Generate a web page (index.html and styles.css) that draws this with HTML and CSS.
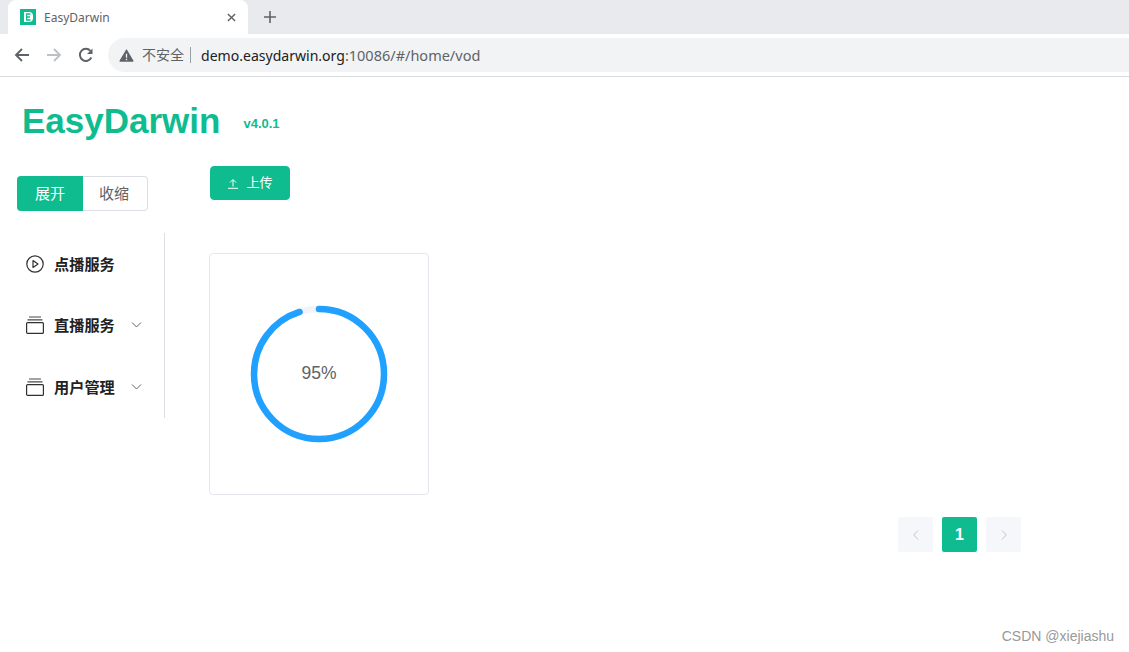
FILE: index.html
```html
<!DOCTYPE html>
<html lang="zh-CN">
<head>
  <meta charset="UTF-8">
  <meta name="viewport" content="width=device-width, initial-scale=1.0">
  <title>EasyDarwin</title>
  <link rel="stylesheet" href="styles.css">
</head>
<body>
  <div class="tabbar">
    <div class="tab">
      <svg class="favicon" viewBox="0 0 16 16">
        <rect width="16" height="16" fill="#0fbc90"/>
        <path d="M4 3h5a4 4 0 0 1 4 4v2a4 4 0 0 1-4 4H4z" fill="#fff"/>
        <path d="M6 5h4.5M6 8h4M6 11h4.5M6.6 5v6" stroke="#0fbc90" stroke-width="1.3" fill="none"/>
      </svg>
      <span class="tab-title">EasyDarwin</span>
      <svg class="tab-close" viewBox="0 0 10 10"><path d="M1 1l8 8M9 1l-8 8" stroke="#5f6368" stroke-width="1.6" fill="none"/></svg>
    </div>
    <svg class="tab-new" viewBox="0 0 12 12"><path d="M6 0v12M0 6h12" stroke="#5f6368" stroke-width="1.6" fill="none"/></svg>
  </div>

  <div class="toolbar">
    <svg class="nav-icon" viewBox="0 0 16 16"><path d="M15 8H2M8 2L2 8l6 6" stroke="#5f6368" stroke-width="1.9" fill="none"/></svg>
    <svg class="nav-icon" viewBox="0 0 16 16"><path d="M1 8h13M8 2l6 6-6 6" stroke="#bdc1c6" stroke-width="1.9" fill="none"/></svg>
    <svg class="nav-icon" viewBox="0 0 16 16"><path d="M13.3 10.5A6 6 0 1 1 12.4 3.9" stroke="#5f6368" stroke-width="2" fill="none"/><path d="M14.5 1.5V7H9z" fill="#5f6368"/></svg>
    <div class="omnibox">
      <svg class="warn" viewBox="0 0 16 14"><path d="M8 1l7 12H1z" fill="#5f6368" stroke="#5f6368" stroke-width="1.2" stroke-linejoin="round"/><path d="M8 5v4.500M8 10.500V12" stroke="#f1f3f4" stroke-width="1.4"/></svg>
      <span class="insecure">不安全</span>
      <span class="url"><span class="url-host">demo.easydarwin.org</span>:10086/#/home/vod</span>
    </div>
  </div>

  <div class="page">
    <header class="brand">
      <h1>EasyDarwin</h1>
      <span class="version">v4.0.1</span>
    </header>

    <div class="layout">
      <aside class="sidebar">
        <div class="toggle">
          <button class="toggle-btn active">展开</button>
          <button class="toggle-btn">收缩</button>
        </div>
        <nav class="menu">
          <a class="menu-item">
            <svg class="menu-icon" viewBox="0 0 18 18"><circle cx="9" cy="9" r="8.2" stroke="#303133" stroke-width="1.2" fill="none"/><path d="M7 5.5L12 9l-5 3.500z" stroke="#303133" stroke-width="1.2" fill="none" stroke-linejoin="round"/></svg>
            <span>点播服务</span>
          </a>
          <a class="menu-item">
            <svg class="menu-icon" viewBox="0 0 18 18"><path d="M3 1h12M1.5 3.800h15" stroke="#4a4a4a" stroke-width="1.2" fill="none"/><rect x="0.6" y="6.6" width="16.8" height="10.8" rx="1" stroke="#303133" stroke-width="1.2" fill="none"/></svg>
            <span>直播服务</span>
            <svg class="chevron" viewBox="0 0 10 6"><path d="M0.5 0.5L5 5l4.500-4.500" stroke="#606266" fill="none"/></svg>
          </a>
          <a class="menu-item">
            <svg class="menu-icon" viewBox="0 0 18 18"><path d="M3 1h12M1.5 3.800h15" stroke="#4a4a4a" stroke-width="1.2" fill="none"/><rect x="0.6" y="6.6" width="16.8" height="10.8" rx="1" stroke="#303133" stroke-width="1.2" fill="none"/></svg>
            <span>用户管理</span>
            <svg class="chevron" viewBox="0 0 10 6"><path d="M0.5 0.5L5 5l4.500-4.500" stroke="#606266" fill="none"/></svg>
          </a>
        </nav>
      </aside>

      <main class="content">
        <button class="upload">
          <svg class="upload-icon" viewBox="0 0 12 12"><path d="M6 9.5V3M3 5.5l3-3 3 3M1 11.300h10" stroke="#fff" fill="none"/></svg>
          <span>上传</span>
        </button>

        <div class="card">
          <div class="progress">
            <svg viewBox="0 0 138 138">
              <circle cx="69" cy="69" r="65" stroke="#f2f3f8" stroke-width="6.5" fill="none"/>
              <circle cx="69" cy="69" r="65" stroke="#20a0ff" stroke-width="6.5" fill="none" stroke-linecap="round" stroke-dasharray="388 408.4" transform="rotate(-90 69 69)"/>
            </svg>
            <span class="progress-text">95%</span>
          </div>
        </div>

        <div class="pager">
          <button class="page-btn">
            <svg class="page-arrow" viewBox="0 0 6 10"><path d="M5 0.5L0.7 5 5 9.5" stroke="#c0c4cc" fill="none"/></svg>
          </button>
          <button class="page-btn current">1</button>
          <button class="page-btn">
            <svg class="page-arrow" viewBox="0 0 6 10"><path d="M1 0.5L5.3 5 1 9.5" stroke="#c0c4cc" fill="none"/></svg>
          </button>
        </div>
      </main>
    </div>
  </div>

  <div class="watermark">CSDN @xiejiashu</div>
</body>
</html>
```

FILE: styles.css
```css
html, body {
  height: 100%;
}
body {
  margin: 0;
  font-family: "Liberation Sans", "Noto Sans CJK SC", sans-serif;
  background-color: #fff;
  overflow: hidden;
}
button {
  font-family: inherit;
  cursor: pointer;
}

/* browser chrome */
.tabbar {
  display: flex;
  align-items: flex-end;
  height: 34px;
  padding-left: 8px;
  background-color: #e8eaed;
  box-sizing: border-box;
}
.tab {
  display: flex;
  align-items: center;
  width: 240px;
  height: 34px;
  padding: 0 10px 0 12px;
  box-sizing: border-box;
  background-color: #fff;
  border-radius: 8px 8px 0 0;
}
.favicon {
  width: 16px;
  height: 16px;
  margin-right: 8px;
}
.tab-title {
  flex: 1;
  font-family: "Noto Sans", sans-serif;
  font-size: 12px;
  color: #5f6368;
}
.tab-close {
  width: 9px;
  height: 9px;
  margin-right: 2px;
}
.tab-new {
  width: 12px;
  height: 12px;
  margin: 0 0 11px 16px;
}
.toolbar {
  display: flex;
  align-items: center;
  height: 42px;
  padding-left: 14px;
  border-bottom: 1px solid #dadce0;
  background-color: #fff;
}
.nav-icon {
  width: 16px;
  height: 16px;
  margin-right: 16px;
}
.omnibox {
  flex: 1;
  display: flex;
  align-items: center;
  height: 34px;
  margin-left: -2px;
  padding-left: 11px;
  background-color: #f1f3f4;
  border-radius: 17px 0 0 17px;
}
.warn {
  width: 15px;
  height: 13px;
  margin-right: 8px;
}
.insecure {
  padding-right: 6px;
  margin-right: 10px;
  border-right: 1px solid #9aa0a6;
  font-size: 14px;
  line-height: 16px;
  color: #5f6368;
}
.url {
  font-family: "Noto Sans", sans-serif;
  font-size: 14.5px;
  color: #5f6368;
}
.url-host {
  font-size: 14.05px;
  color: #202124;
}

/* page */
.brand {
  display: flex;
  align-items: center;
  height: 89px;
  padding-left: 22px;
}
.brand h1 {
  margin: 0 23px 2px 0;
  font-size: 35px;
  color: #0fbc90;
}
.version {
  font-size: 13px;
  font-weight: bold;
  color: #0fbc90;
  margin-top: 4px;
}
.layout {
  display: flex;
}
.sidebar {
  width: 148px;
  margin: 10px 0 0 17px;
}
.toggle {
  display: flex;
  width: 131px;
  height: 35px;
}
.toggle-btn {
  flex: 1;
  padding: 0 2px 3px 0;
  font-size: 15px;
  color: #606266;
  background-color: #fff;
  border: 1px solid #dcdfe6;
  border-left: none;
  border-radius: 0 4px 4px 0;
}
.toggle-btn.active {
  flex: none;
  width: 66px;
  padding-right: 0;
  color: #fff;
  background-color: #0fbc90;
  border: none;
  border-radius: 4px 0 0 4px;
}
.menu {
  margin-top: 22px;
  padding-left: 9px;
  height: 185px;
  border-right: 1px solid #dcdfe6;
}
.menu-item {
  display: flex;
  align-items: center;
  height: 61.5px;
  font-size: 15.2px;
  font-weight: bold;
  color: #222;
}
.menu-item span {
  padding-bottom: 2px;
}
.menu-icon {
  width: 18px;
  height: 18px;
  margin-right: 10px;
}
.chevron {
  width: 11px;
  height: 6px;
  margin-left: 16px;
}
.content {
  flex: 1;
  margin-left: 44px;
}
.upload {
  display: flex;
  align-items: center;
  justify-content: center;
  width: 80px;
  height: 34px;
  padding: 0 0 4px;
  margin-left: 1px;
  font-size: 13px;
  color: #fff;
  background-color: #0fbc90;
  border: 1px solid #0fbc90;
  border-radius: 4px;
}
.upload-icon {
  width: 12px;
  height: 12px;
  margin: 4px 7px 0 0;
}
.card {
  display: flex;
  justify-content: center;
  width: 220px;
  height: 242px;
  margin-top: 53px;
  box-sizing: border-box;
  background-color: #fff;
  border: 1px solid #e6e6ee;
  border-radius: 4px;
}
.progress {
  position: relative;
  width: 138px;
  height: 138px;
  margin-top: 51px;
}
.progress svg {
  display: block;
}
.progress-text {
  position: absolute;
  inset: 0 0 2px;
  display: flex;
  align-items: center;
  justify-content: center;
  font-size: 17.5px;
  color: #606266;
}
.pager {
  display: flex;
  gap: 9px;
  margin: 22px 0 0 689px;
}
.page-btn {
  display: flex;
  align-items: center;
  justify-content: center;
  width: 35px;
  height: 35px;
  padding: 0;
  font-weight: bold;
  background-color: #f6f7fb;
  border: none;
  border-radius: 2px;
}
.page-btn.current {
  font-size: 16px;
  color: #fff;
  background-color: #0fbc90;
}
.page-arrow {
  width: 6px;
  height: 10px;
}
.watermark {
  position: absolute;
  right: 15px;
  bottom: 8px;
  font-size: 14px;
  color: #999;
}
```
